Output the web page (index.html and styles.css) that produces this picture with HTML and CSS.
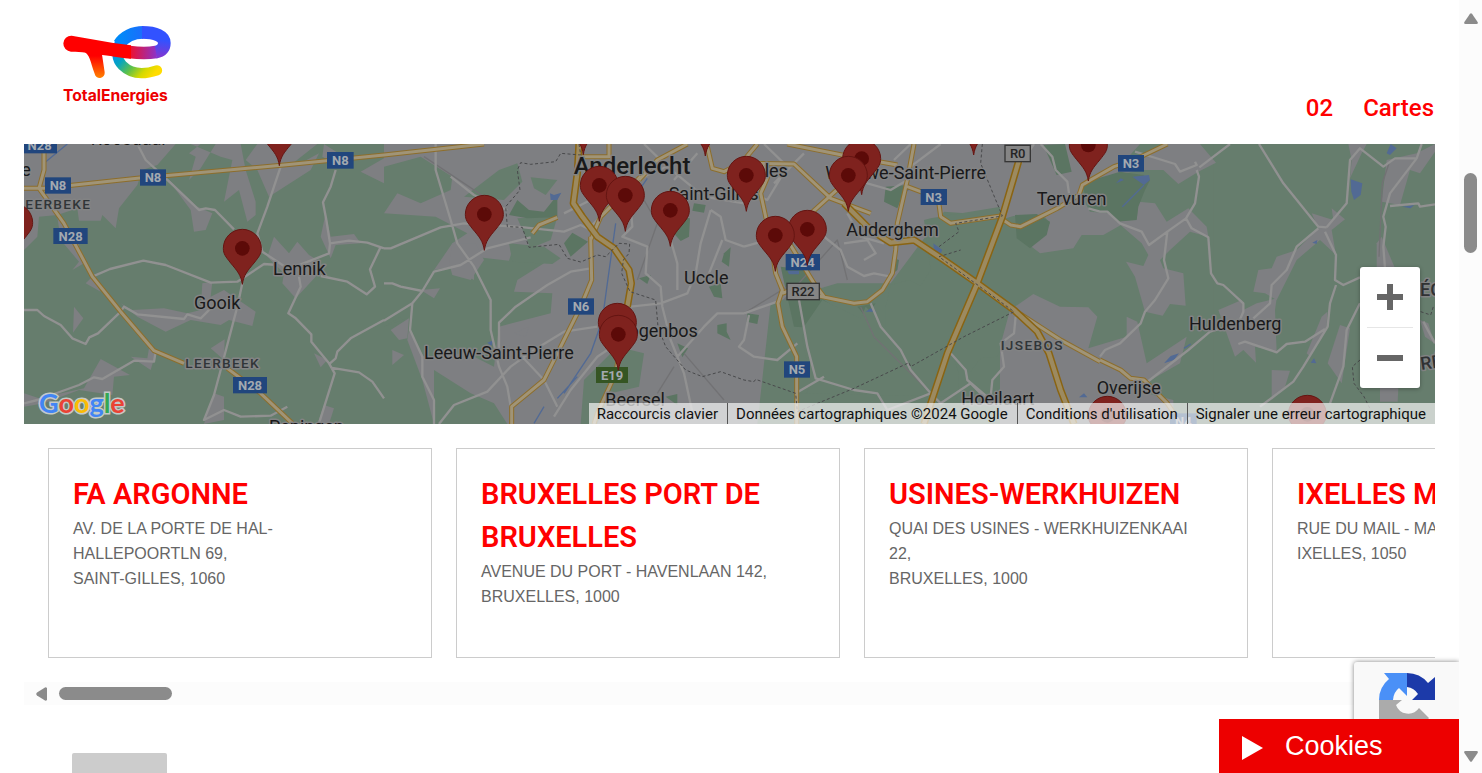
FILE: index.html
```html
<!DOCTYPE html>
<html lang="fr">
<head>
<meta charset="utf-8">
<title>TotalEnergies - Cartes</title>
<link rel="stylesheet" href="styles.css">
</head>
<body>
<div class="page">
<div class="content">
  <header class="header">
    <a class="logo" href="#" aria-label="TotalEnergies">
      <svg viewBox="36 30 336 246" role="img">
        <defs>
          <linearGradient id="leg" x1="0" y1="0" x2="0" y2="1"><stop offset=".2" stop-color="#f00"/><stop offset="1" stop-color="#ff8200"/></linearGradient>
          <linearGradient id="bar" gradientUnits="userSpaceOnUse" x1="238" y1="0" x2="322" y2="0"><stop offset="0" stop-color="#f0102a"/><stop offset="1" stop-color="#8a34cc"/></linearGradient>
          <linearGradient id="bowl" gradientUnits="userSpaceOnUse" x1="320" y1="130" x2="330" y2="60"><stop offset="0" stop-color="#8a34cc"/><stop offset=".8" stop-color="#3252ff"/></linearGradient>
          <linearGradient id="top" gradientUnits="userSpaceOnUse" x1="210" y1="0" x2="330" y2="0"><stop offset="0" stop-color="#0089f8"/><stop offset="1" stop-color="#3058ff"/></linearGradient>
          <linearGradient id="tail" gradientUnits="userSpaceOnUse" x1="205" y1="85" x2="310" y2="180"><stop offset="0" stop-color="#0087f5"/><stop offset=".3" stop-color="#06a5c0"/><stop offset=".55" stop-color="#5cc04c"/><stop offset=".8" stop-color="#d5d900"/><stop offset="1" stop-color="#ffdc00"/></linearGradient>
        </defs>
        <g fill="none">
          <path d="M214 78C196 103 199 134 218 152C240 174 276 181 321 166" stroke="url(#tail)" stroke-width="31" stroke-linecap="round"/>
          <path d="M280 52C250 52 222 65 208 88" stroke="url(#top)" stroke-width="38"/>
          <path d="M316 112C334 108 343 98 343 84C343 64 318 52 276 52" stroke="url(#bowl)" stroke-width="38"/>
          <path d="M238 111C262 114 296 115 318 111" stroke="url(#bar)" stroke-width="38"/>
        </g>
        <path d="M96 106C122 118 120 140 134 176A15 15 0 0 0 164 172L155 112Z" fill="url(#leg)"/>
        <path d="M65 62L190 84 243 91V131C200 128 110 109 63 110A24 24 0 0 1 65 62Z" fill="#f00"/>
        <text class="logo-word" x="39" y="257">TotalEnergies</text>
      </svg>
    </a>
    <nav class="nav">
      <a href="#">02</a>
      <a href="#">Cartes</a>
    </nav>
  </header>

  <main>
    <section class="map" aria-label="Carte des stations">
      <svg class="map-canvas" viewBox="0 12 4233 840" preserveAspectRatio="xMidYMid slice">
        <defs>
          <g id="pin"><path d="M0 108C-4 80-15 68-35 44C-50 25-57 17-57 0A57 57 0 0 1 57 0C57 17 50 25 35 44C15 68 4 80 0 108Z" fill="#7f221e" stroke="#651512" stroke-width="3"/><circle r="22" fill="#5c0a08"/></g>
        </defs>
        <rect width="4233" height="860" fill="#667d6d"/>

        <g class="town">
          <path d="M0 12H455L400 75 355 90 340 135 285 205 275 265 235 225 230 242H165L160 205 100 225 45 230 40 290 0 330Z"/>
          <path d="M500 12H530L495 40 515 50 495 120 530 85 575 12H650L665 90 695 185 695 225 670 245 645 150 600 185 625 60 590 50Z"/>
          <path d="M700 12H880L800 75 830 70 885 40 860 90 735 170 700 90 665 60Z"/>
          <path d="M900 12L975 60 960 85 895 50Z"/><path d="M1010 95L1080 55V130Z"/>
          <path d="M430 115L520 200 565 220 545 270 510 275 500 210Z"/>
          <path d="M100 230L160 300 180 370 145 390 165 365 110 300Z"/><path d="M185 430L205 410 230 455Z"/>
          <path d="M150 500L178 535 147 578Z"/><path d="M290 490L325 510 420 505 490 520 530 510 535 430 565 425 560 470 600 450 695 515 685 558 615 540 590 555 500 540 425 575 340 530Z"/>
          <path d="M750 290L795 340 820 305 855 345 880 360 875 410 815 475 775 430 780 400 730 350Z"/>
          <path d="M905 220L920 290 990 282 1010 310 935 315 920 355 890 290Z"/>
          <path d="M560 625L602 598 600 660Z"/><path d="M870 640L910 660 890 682Z"/>
          <path d="M0 760L45 775 180 745 230 657 318 705 270 710 265 765 165 750 60 790 0 800Z"/>
          <path d="M320 650L370 655 375 625 395 640 380 690Z"/><path d="M570 760L600 770V840L540 852Z"/><path d="M900 795L930 805 915 852H880Z"/>
          <path d="M1080 12H3330L3190 90 3030 220 2900 225 2760 215 2600 430 2440 430 2240 490 2200 852H1720L1080 852V780L1140 690 1110 560 1250 450 1100 440 1080 300Z"/>
        </g>

        <g transform="translate(1080 0)">
          <g class="field">
            <path d="M0 80L110 50 205 110 200 150 110 190 40 160 0 220Z"/><path d="M345 90L400 70 415 125 360 180 240 170Z"/><path d="M440 112L520 120 485 165 450 145Z"/>
            <path d="M0 220L155 230 250 280 205 310 150 390 200 380 270 420 400 420 390 455 505 460 500 520 345 560 330 680 250 640 120 650 50 530 0 560Z"/>
            <path d="M270 350L375 362 385 330 440 345 480 370 400 420 270 420Z"/>
            <path d="M0 560L80 530 70 600 115 720 150 852H0Z"/><path d="M400 235L520 230 500 300 440 325Z"/><path d="M375 310L480 320 530 355 505 372 385 365Z"/>
            <path d="M150 690L260 760 330 790 370 852H150Z"/><path d="M590 852L600 720 700 620 780 640 765 740 680 760 640 852Z"/>
          </g>
          <g class="town"><path d="M205 310L275 310 300 360 260 420 205 405 195 370Z"/><path d="M110 450L168 445 150 475Z"/><path d="M20 570L75 535 70 595 45 600Z"/><path d="M25 630L60 645 25 675Z"/><path d="M390 580L435 560 425 590Z"/></g>
          <g class="wood"><path d="M375 225L400 180 435 210 480 215 520 165V232L430 235Z"/><path d="M565 278L612 305 560 350 540 310Z"/><path d="M865 230L918 235 915 290 890 303 865 275Z"/><path d="M930 190L965 195 960 218 925 212Z"/><path d="M1020 340L1040 322 1035 380 1013 365Z"/><path d="M975 440L1010 430 1015 475 990 470Z"/><path d="M765 415L800 405 790 432Z"/><path d="M880 610L912 625 895 652Z"/><path d="M1000 555L1028 550V575L1040 600 1000 580Z"/><path d="M845 770L880 762V795Z"/></g>
        </g>
        <g transform="translate(2160 0)">
          <g class="wood"><path d="M425 140L490 135 470 180 460 205 420 185Z"/><path d="M110 380L190 390 240 480 330 540 300 530 175 562 150 560Z"/><path d="M10 520L45 525 40 552 8 545Z"/><path d="M340 500L395 490 365 530Z"/><path d="M450 355L465 360 460 390 448 400Z"/></g>
          <g class="field">
            <path d="M560 235L770 200 790 220 860 225 915 245 895 320 1010 285 1068 290V620L1035 625 1060 530 1000 500 940 500 870 462 815 490 800 560 760 650 710 655 680 695 625 640 645 700 640 790H180L200 720 175 600 180 560 235 480 350 535 365 500 425 560V500L440 435 495 420 530 437 560 390 540 240Z"/>
            <path d="M160 760L640 770 620 852H160Z"/>
          </g>
        </g>
        <g transform="translate(2928 0)">
          <path class="field" d="M60 12H640V852H60Z"/>
          <g class="town">
            <path d="M240 130L330 80 420 50 490 12H600L648 68 595 95 535 132 490 90 420 90Z"/>
            <path d="M0 12H420L350 90 260 125 240 160 270 215 325 220 380 245 310 285 245 285 220 325 120 340 95 320 150 250 130 225 40 228 0 240Z"/>
            <path d="M350 245L410 238 415 185 465 190 500 245 565 205 620 260 625 290 570 275 510 330 480 360 490 385 550 400 557 497 510 492 488 527 435 515 405 410 378 365 430 378 445 345 425 310Z"/>
            <path d="M30 510L100 462 180 500 265 502 292 530 265 625 380 590V530L412 545 440 670 560 590 540 670 400 750 520 780V852H0V620Z"/>
          </g>
          <g class="wood"><path d="M245 130L360 95 430 105 450 120 435 150 415 200 410 240 350 245 325 215 270 212Z"/><path d="M45 225L110 222 150 245 140 285 90 325 50 295Z"/><path d="M130 15L195 12 215 95 170 105Z"/></g>
        </g>
        <g transform="translate(3228 0)">
          <g class="town">
            <path d="M355 510L425 480 430 510 470 490 530 475 525 510 530 635 465 620 468 668 430 630 405 650Z"/>
            <path d="M460 455L475 390 515 385 530 350 590 330 655 265 635 220 700 240 695 205 735 238 695 270 708 345 660 300 590 360 530 480 495 460Z"/>
            <path d="M745 12H800L785 40 750 115 755 60Z"/><path d="M860 60L950 40 1005 12V35L960 100 930 90 900 195 845 185Z"/><path d="M845 290L885 385H830V310Z"/>
            <path d="M515 690L570 692 555 740 515 780Z"/><path d="M683 670L720 555 750 565 725 730Z"/><path d="M665 530L682 515 680 560 630 650 620 640Z"/><path d="M840 740L895 745 893 785H840Z"/><path d="M960 540L985 550 1003 610 975 590Z"/>
          </g>
        </g>

        <g class="water">
          <path d="M1578 160L1590 165 1612 158 1600 180H1580Z"/><path d="M1390 608L1410 600 1402 618Z"/><path d="M2290 392H2325V403H2295Z"/><path d="M2728 310L2755 330 2750 340 2730 330Z"/><path d="M2525 515L2540 505 2557 515Z"/><path d="M3165 772L3180 760 3190 772Z"/><path d="M2645 125L2655 120V150L2640 160Z"/>
          <path d="M3325 110L3375 105 3378 120 3360 135Z"/><path d="M3276 130L3290 115 3300 120Z"/><path d="M3980 118L4015 130 4010 165 3990 180 3982 155Z"/><path d="M4088 40L4100 12 4118 25 4098 45Z"/><path d="M3865 308L3880 300 3878 312Z"/><path d="M3420 670L3440 648 3465 640 3450 660Z"/><path d="M3860 668L3870 655 3877 670Z"/><path d="M4135 200L4170 195 4160 205Z"/>
          <path class="river" d="M1775 250L1750 430 1735 540 1700 640 1620 760M1560 800L1530 850M1870 115L1790 230M60 70L130 12M3295 200L3360 135M1600 775L1660 710M3480 625L3500 612"/>
        </g>

        <g class="track"><path d="M1200 50L1380 170M2280 480L2440 300 2470 420M2160 520L2290 440M2510 500L2550 590 2660 700 2720 760M1840 420L1900 250 1860 180M1950 680L1900 760M4095 70L4075 130 4065 350M1980 640L2100 780"/></g>
        <g class="road">
          <path d="M340 12L365 60 420 110 525 210 545 205 573 210 630 268M770 80L730 200 700 280 715 335 790 385M935 90L920 140 897 187 907 240 918 310 915 340 800 385M918 310L975 302 1030 308 1080 325M1068 325L1038 388 1053 440 1028 463 970 425 890 408M205 410L258 387 358 362 425 375 560 428 640 425 720 372 760 375M655 430L640 500 590 690 570 765 540 840 600 810 650 830 740 827 790 800M0 510L40 510 60 528 110 555 145 595 185 612 196 592 222 580 290 515 300 500 340 523 480 537 490 523 530 535 560 505M0 790L40 780 165 735 210 712 235 717 330 662 390 665 395 635M825 410L830 440 793 520 813 533 862 583 862 605 915 670 932 700 885 850M1080 540L980 595 940 635 935 655 918 670M920 683L1005 697 1045 725 1080 775"/>
          <g transform="translate(1080 0)">
            <path d="M155 12V90L200 240 220 310 270 380 320 480V570L345 680 370 740 380 800M0 325H20L170 262 240 250 420 262 540 275 590 255 620 270M0 430H25L50 440 115 453 85 490 0 542M85 490L78 570 115 650V710L150 780V852M115 453L150 395 230 375 310 325 440 292M370 210L270 165 200 110M345 635V548L395 500 490 435 560 395 620 385M165 852L210 795 310 755 380 680 450 630 540 575 640 560M410 645L480 720 520 800M620 260L700 180 780 110 860 75M740 200L745 260 715 290 790 320 785 400 830 440 835 500 860 600 900 700 930 840M860 300L880 370 880 450M980 210L950 310 935 400 910 460 830 490 740 500M980 210L1010 230 1025 300 1080 320M1015 300L975 400M880 650L960 560 1000 520 1080 520M510 830L560 750 640 650 700 610M780 12L850 80 960 170 1080 190M870 120L940 40M620 180L540 220"/>
          </g>
          <g transform="translate(2160 0)">
            <path d="M0 520L100 485M15 525L0 600L-15 620 30 650 100 660 160 610M165 480L190 620 215 715 330 750 400 760 430 810 560 760 590 790 680 730 740 790M155 760L240 710M380 490L410 560 470 630 500 690 560 760M200 210L240 290 290 330 310 380 360 408 390 400 440 410M310 220L350 290 420 310M300 310L370 300 395 340 360 360M60 12L130 80 70 180 0 150M330 60L370 130 440 150 490 120M500 80L590 12M620 640L665 690 670 720 740 780M815 530L810 580 770 610 780 680 745 720 740 770M870 12L830 70M890 12L925 50 935 90 970 125 975 160M500 12L450 60M0 320L70 300M180 40L90 130"/>
          </g>
          <g transform="translate(3228 0)">
            <path d="M105 35L225 72 240 95 290 75 285 65M298 82L390 12M290 90L297 110 285 190 258 235 202 275 192 360 205 415 165 480 135 515 122 550 60 610 15 630 0 650M-35 205L0 215H22L60 250 125 275 147 315 202 275M258 235L275 265 325 292 333 400 352 430 370 435 430 490V515L415 550 330 575 265 630 130 735M477 12L550 130 655 260 680 262M680 262L740 190 750 60 780 25 850 80 885 55H950L965 12M950 55L870 160 850 230 857 260 850 320 855 385M870 198L955 190 960 200 1005 193M655 265L590 320 560 390 515 435 510 490 460 535M675 275L708 345 705 420 730 435 780 412M708 435L690 490 683 560 610 680 580 725 480 800M675 567L615 605 560 612 530 637 435 605 415 612M780 490L740 570 730 680 690 790M970 545L1005 610"/>
          </g>
        </g>

        <g class="highway">
          <path d="M0 145H60L340 115 780 75 1080 45 1380 12M60 12V90L45 145 120 250 205 410 290 515 390 632 480 670M610 685L710 760 805 850"/>
          <path d="M1525 280L1545 255 1600 232M1845 120L1900 60 1990 12M1660 50H1755L1755 12M2050 20L2065 85 2100 95 2150 70M1700 290L1703 420 1670 500 1560 720 1463 800V852M1700 300L1730 230 1850 110M1800 560L1775 700 1720 820 1710 852"/>
          <path d="M2160 55L2240 90 2210 160 2240 300 2255 400 2275 450 2262 490 2275 560 2318 650V852M2275 460L2300 450 2395 470 2490 490 2530 485 2575 450 2605 400 2615 330 2620 250 2650 120 2670 12M2160 70L2310 72 2420 175 2540 220M2200 12L2160 60M2290 300L2370 430 2400 470M2290 12L2480 50 2620 75M2350 230L2460 130 2530 90M2650 140L2690 155H2740L2750 230 2780 250 2930 228M2930 235L2960 255 2990 260 3100 205 3165 165 3175 135 3200 120 3270 80 3330 60 3430 12M3228 660L3290 690 3320 715 3360 720 3430 790 3450 820M2970 510L3110 600 3228 665"/>
        </g>
        <g class="highway-core">
          <path d="M0 145H60L340 115 780 75 1080 45 1380 12M60 12V90L45 145 120 250 205 410 290 515 390 632 480 670M610 685L710 760 805 850"/>
          <path d="M1525 280L1545 255 1600 232M1845 120L1900 60 1990 12M1660 50H1755L1755 12M2050 20L2065 85 2100 95 2150 70M1700 290L1703 420 1670 500 1560 720 1463 800V852M1700 300L1730 230 1850 110M1800 560L1775 700 1720 820 1710 852"/>
          <path d="M2160 55L2240 90 2210 160 2240 300 2255 400 2275 450 2262 490 2275 560 2318 650V852M2275 460L2300 450 2395 470 2490 490 2530 485 2575 450 2605 400 2615 330 2620 250 2650 120 2670 12M2160 70L2310 72 2420 175 2540 220M2200 12L2160 60M2290 300L2370 430 2400 470M2290 12L2480 50 2620 75M2350 230L2460 130 2530 90M2650 140L2690 155H2740L2750 230 2780 250 2930 228M2930 235L2960 255 2990 260 3100 205 3165 165 3175 135 3200 120 3270 80 3330 60 3430 12M3228 660L3290 690 3320 715 3360 720 3430 790 3450 820M2970 510L3110 600 3228 665"/>
        </g>
        <g class="motorway"><path d="M1665 12L1660 100 1648 190 1675 230 1720 290 1770 325 1815 390 1822 430 1810 500"/><path d="M2460 190L2540 270 2600 308 2670 300 2760 360 2860 430 2970 510 3040 575 3075 640 3110 750 3150 852M2985 60L2935 230 2860 430 2770 640 2700 852"/></g>
        <g class="motorway-core"><path d="M1665 12L1660 100 1648 190 1675 230 1720 290 1770 325 1815 390 1822 430 1810 500"/><path d="M2460 190L2540 270 2600 308 2670 300 2760 360 2860 430 2970 510 3040 575 3075 640 3110 750 3150 852M2985 60L2935 230 2860 430 2770 640 2700 852"/></g>

        <g class="border"><path d="M1665 12L1670 45 1610 40 1595 65 1520 73 1490 68 1480 90 1488 150 1445 200 1450 260 1495 262 1515 322 1605 313 1630 355 1670 366 1720 345 1745 350 1785 310 1817 312 1815 340 1798 360 1793 400 1818 455 1895 480 1902 560 1925 620 1985 690 2035 710 2090 695 2160 720 2190 725 2195 718 2315 760 2320 815 2490 745 2655 668 2660 680 2820 590 2970 515 2745 350 2810 330M2745 320L2805 275 2795 250 2935 228 2870 70 2875 12M4190 515L4220 525 4228 500M4008 660L3985 680 3990 730 4020 770 4040 810"/></g>

        <g class="shield">
          <rect x="-4" y="-10" width="103" height="50"/><rect x="63" y="112" width="78" height="49"/><rect x="348" y="88" width="78" height="49"/><rect x="909" y="36" width="80" height="50"/><rect x="88" y="264" width="103" height="48"/><rect x="627" y="711" width="102" height="49"/><rect x="1632" y="475" width="78" height="49"/><rect x="2285" y="342" width="103" height="49"/><rect x="2280" y="664" width="78" height="49"/><rect x="2690" y="147" width="79" height="48"/><rect x="3282" y="45" width="78" height="50"/><rect x="3438" y="820" width="80" height="50"/>
          <rect class="euro" x="1716" y="681" width="96" height="48"/>
          <rect class="ring" x="2289" y="430" width="97" height="49"/><rect class="ring" x="2943" y="16" width="76" height="49"/>
        </g>
        <g class="shield-text">
          <text x="47" y="30">N28</text><text x="102" y="151">N8</text><text x="387" y="126">N8</text><text x="949" y="75">N8</text><text x="140" y="302">N28</text><text x="678" y="749">N28</text><text x="1671" y="513">N6</text><text x="2336" y="381">N24</text><text x="2319" y="703">N5</text><text x="2729" y="186">N3</text><text x="3321" y="85">N3</text><text x="3478" y="858">N4</text><text x="1764" y="719">E19</text>
          <text class="ring-text" x="2337" y="469">R22</text><text class="ring-text" x="2981" y="55">R0</text>
        </g>
        <g class="place">
          <text x="200" y="16">Roosdaal</text><text x="-8" y="108">e</text><text x="747" y="404">Lennik</text><text x="510" y="508">Gooik</text><text x="735" y="880">Pepingen</text><text x="1200" y="656">Leeuw-Saint-Pierre</text><text x="1934" y="180">Saint-Gilles</text><text x="2222" y="111">les</text><text x="1980" y="431">Uccle</text><text x="1760" y="592">Drogenbos</text><text x="1744" y="798">Beersel</text><text x="2404" y="118">Woluwe-Saint-Pierre</text><text x="2467" y="288">Auderghem</text><text x="3038" y="195">Tervuren</text><text x="2812" y="794">Hoeilaart</text><text x="3218" y="762">Overijse</text><text x="3495" y="570">Huldenberg</text>
          <text class="city" x="1649" y="101">Anderlecht</text>
          <text class="region" x="4188" y="468">ÉGION</text><text class="region" x="4192" y="690" transform="rotate(-8 4192 690)">RÉG</text>
          <text class="hamlet" x="4" y="206">EERBEKE</text><text class="hamlet" x="484" y="683">LEERBEEK</text><text class="hamlet" x="2930" y="629">IJSEBOS</text>
        </g>
        <g>
          <use href="#pin" x="766" y="-31"/><use href="#pin" x="-31" y="248"/><use href="#pin" x="655" y="325"/><use href="#pin" x="1381" y="223"/><use href="#pin" x="1678" y="-64"/><use href="#pin" x="2044" y="-60"/><use href="#pin" x="1726" y="136"/><use href="#pin" x="1804" y="166"/><use href="#pin" x="1939" y="211"/><use href="#pin" x="2167" y="106"/><use href="#pin" x="1780" y="547"/><use href="#pin" x="1783" y="583"/><use href="#pin" x="2350" y="268"/><use href="#pin" x="2254" y="286"/><use href="#pin" x="2513" y="56"/><use href="#pin" x="2473" y="106"/><use href="#pin" x="2849" y="-63"/><use href="#pin" x="3193" y="15"/><use href="#pin" x="3250" y="826"/><use href="#pin" x="3850" y="823"/>
        </g>
      </svg>
      <a class="google" href="#" aria-label="Google"><span class="g-blue">G</span><span class="g-red">o</span><span class="g-yellow">o</span><span class="g-blue">g</span><span class="g-green">l</span><span class="g-red">e</span></a>
      <div class="zoom">
        <button type="button" aria-label="Zoom avant"><svg viewBox="0 0 26 26"><path d="M10 0h6v10h10v6H16v10h-6V16H0v-6h10z"/></svg></button>
        <button type="button" aria-label="Zoom arrière"><svg viewBox="0 0 26 26"><path d="M0 10h26v6H0z"/></svg></button>
      </div>
      <div class="credits">
        <button type="button">Raccourcis clavier</button>
        <span>Données cartographiques ©2024 Google</span>
        <a href="#">Conditions d'utilisation</a>
        <a href="#">Signaler une erreur cartographique</a>
      </div>
    </section>

    <section class="stations">
      <article class="card"><h2>FA ARGONNE</h2><p>AV. DE LA PORTE DE HAL-<br>HALLEPOORTLN 69,<br>SAINT-GILLES, 1060</p></article>
      <article class="card"><h2>BRUXELLES PORT DE BRUXELLES</h2><p>AVENUE DU PORT - HAVENLAAN 142,<br>BRUXELLES, 1000</p></article>
      <article class="card"><h2>USINES-WERKHUIZEN</h2><p>QUAI DES USINES - WERKHUIZENKAAI<br>22,<br>BRUXELLES, 1000</p></article>
      <article class="card"><h2>IXELLES MAIL</h2><p>RUE DU MAIL - MAILSTRAAT 50,<br>IXELLES, 1050</p></article>
    </section>
    <div class="hscroll">
      <svg class="hscroll-arrow" viewBox="0 0 11 14"><path d="M11 1V13Q10 14 9 13.500L1 8.500Q-.5 7 1 5.500L9 .5Q10 0 11 1Z"/></svg>
      <div class="hscroll-thumb"></div>
    </div>
    <div class="placeholder"></div>
  </main>

  <div class="captcha">
    <svg viewBox="0 0 56 56">
      <path d="M0 28A27 27 0 0 1 10 7L5 1H28V24L20 16A16 16 0 0 0 14 28Z" fill="#4a90f7"/>
      <path d="M28 1A27 27 0 0 1 49 11L56 5V28H33L39 22A15 15 0 0 0 28 15Z" fill="#1c3aa9"/>
      <path d="M0 28H23L17 33A13 13 0 0 0 40 36L50 46A27 27 0 0 1 7 49L0 55Z" fill="#ababab"/>
    </svg>
  </div>
  <button class="cookies" type="button"><svg viewBox="0 0 21 24"><path d="M0 0L21 12 0 24Z"/></svg>Cookies</button>
</div>
<div class="vscroll">
  <svg class="vscroll-arrow" viewBox="0 0 14 11"><path d="M1.500 11Q-.5 11 .4 9L6 .8Q7-.4 8 .8L13.600 9Q14.500 11 12.500 11Z"/></svg>
  <div class="vscroll-thumb"></div>
  <svg class="vscroll-arrow down" viewBox="0 0 14 11"><path d="M1.500 11Q-.5 11 .4 9L6 .8Q7-.4 8 .8L13.600 9Q14.500 11 12.500 11Z"/></svg>
</div>
</div>
</body>
</html>
```
FILE: styles.css
```css
* { box-sizing: border-box; }
body { margin: 0; background: #fff; font-family: "Liberation Sans", Arial, sans-serif; }
a { color: inherit; text-decoration: none; }
button { border: 0; padding: 0; background: none; font: inherit; color: inherit; }
svg { display: block; }
.page { display: flex; height: 100vh; overflow: hidden; }
.content { position: relative; flex: 1; min-width: 0; overflow: hidden; padding: 0 24px; }

.header { display: flex; justify-content: space-between; align-items: flex-end; height: 144px; padding-left: 38px; }
.logo { align-self: flex-start; margin-top: 25px; }
.logo svg { width: 112px; height: 82px; }
.logo-word { font: 700 47px Inter, sans-serif; fill: #ed0000; }
.nav { display: flex; gap: 30px; padding: 0 1px 20px 0; font: 500 24px/32px Roboto, sans-serif; color: #f00; }

.map { position: relative; height: 280px; overflow: hidden; background: #667d6d; }
.map-canvas { width: 100%; height: 280px; }
.town { fill: #7e7f82; }
.field { fill: #667d6d; }
.wood { fill: #5b7562; }
.water { fill: #526a94; }
.river { fill: none; stroke: #526a94; stroke-width: 4; }
.road, .track, .highway, .highway-core, .motorway, .motorway-core, .border { fill: none; stroke-linejoin: round; }
.road { stroke: #919191; stroke-width: 7; }
.track { stroke: #727274; stroke-width: 4; }
.highway { stroke: #8d6e2c; stroke-width: 15; }
.highway-core { stroke: #a09477; stroke-width: 9; }
.motorway { stroke: #8a6412; stroke-width: 22; }
.motorway-core { stroke: #9c8a60; stroke-width: 13; }
.border { stroke: #48494b; stroke-width: 3; stroke-dasharray: 9 7; }
.shield { fill: #21467d; }
.euro { fill: #355523; }
.ring { fill: #858585; stroke: #363636; stroke-width: 4; }
.shield-text { font: 700 39px Roboto, sans-serif; fill: #a3a9b0; text-anchor: middle; }
.ring-text { font-weight: 500; fill: #242424; }
.place { font: 400 54px Roboto, sans-serif; fill: #19191a; stroke: #828384; stroke-width: 9; stroke-linejoin: round; paint-order: stroke; }
.city { font-size: 72px; font-weight: 500; }
.region { font-size: 54px; font-weight: 500; fill: #303234; }
.hamlet { font-size: 41px; font-weight: 500; letter-spacing: 4px; fill: #303538; }

.google { position: absolute; left: 15px; bottom: 5px; font: 700 27px/32px Lato, sans-serif; -webkit-text-stroke: 3px #c4cac7; paint-order: stroke; }
.g-blue { color: #4285f4; }
.g-red { color: #ea4335; }
.g-yellow { color: #fbbc04; }
.g-green { color: #34a853; }
.zoom { position: absolute; right: 15px; bottom: 36px; width: 60px; padding: 0 7px; background: #fff; border-radius: 3px; box-shadow: 0 1px 4px rgba(0, 0, 0, .3); }
.zoom button { display: flex; align-items: center; justify-content: center; width: 100%; height: 60px; }
.zoom button + button { height: 61px; border-top: 1px solid #e6e6e6; }
.zoom svg { width: 26px; height: 26px; fill: #666; }
.credits { position: absolute; right: 0; bottom: 0; display: flex; font: 400 15px/19px Roboto, sans-serif; color: #111; white-space: nowrap; background: rgba(245, 245, 245, .7); }
.credits > * { padding: 2px 9px 0 8px; }
.credits > * + * { border-left: 1px solid #555; }

.stations { display: flex; gap: 24px; padding: 24px; overflow: hidden; }
.card { flex: 0 0 384px; min-height: 210px; padding: 24px; border: 1px solid #ccc; }
.card h2 { margin: 0; font: 600 29px/43px Roboto, sans-serif; color: #f00; }
.card p { margin: 0; font-size: 16px; line-height: 25px; color: #666; }
.hscroll { display: flex; align-items: center; gap: 12px; height: 23px; padding-left: 12px; background: #fcfcfc; }
.hscroll-arrow { width: 11px; height: 14px; fill: #8b8b8b; }
.hscroll-thumb { width: 113px; height: 13px; border-radius: 7px; background: #8b8b8b; }
.placeholder { width: 95px; height: 48px; margin: 48px 0 0 48px; border-radius: 2px; background: #ccc; }

.captcha { position: absolute; right: 0; bottom: 33px; width: 105px; height: 78px; padding: 10px 0 0 25px; background: #f9f9f9; border-radius: 3px 0 0 3px; box-shadow: 0 0 5px #808080; }
.captcha svg { width: 56px; height: 56px; }
.cookies { position: absolute; right: 0; bottom: 0; display: flex; align-items: center; gap: 22px; width: 240px; height: 54px; padding-left: 23px; background: #ed0000; color: #fff; font-size: 27px; }
.cookies svg { width: 21px; height: 24px; margin-top: 4px; fill: #fff; }

.vscroll { display: flex; flex-direction: column; align-items: center; width: 23px; padding: 13px 0 11px; background: #fcfcfc; }
.vscroll-arrow { width: 14px; height: 11px; fill: #8b8b8b; }
.vscroll-thumb { width: 13px; height: 80px; margin: 149px 0 auto; border-radius: 7px; background: #8b8b8b; }
.down { transform: rotate(180deg); }
```
